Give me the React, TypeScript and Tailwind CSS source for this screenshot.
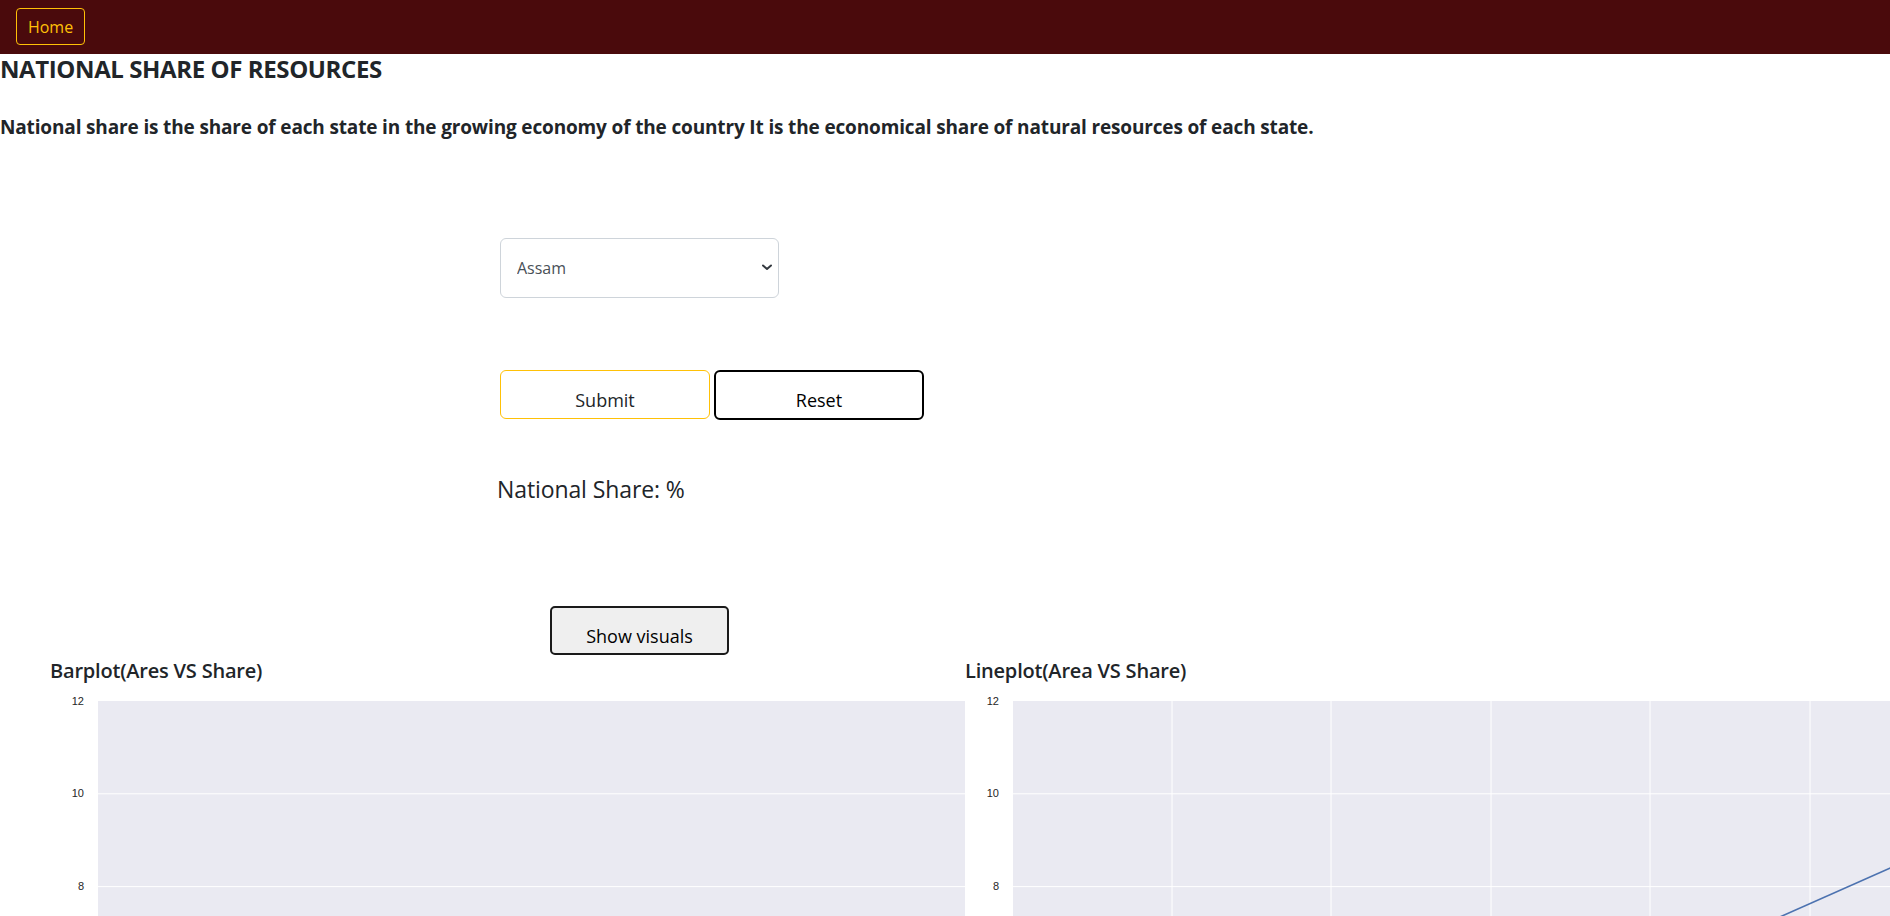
import React from "react";

const font = { fontFamily: '"Open Sans", "Noto Sans", sans-serif' };

function Chart({ title, kind }: { title: string; kind: "bar" | "line" }) {
  const W = kind === "bar" ? 915 : 925;
  const H = 420;
  const plotLeft = 48;
  const plotTop = 40;
  const unit = 46.4; // px per y-unit
  const yFor = (v: number) => plotTop + (12 - v) * unit;
  const ticks = [12, 10, 8, 6, 4, 2, 0];
  const vlines = [207, 366, 526, 685, 845];
  return (
    <div className="flex flex-col shrink-0 w-[915px]">
      <div className="text-[20px] font-semibold text-[#212529] leading-[24px] pt-[2px] tracking-[-0.2px]">{title}</div>
      <svg width={W} height={H} className="block shrink-0" style={{ marginTop: -22 }}>
        <rect x={plotLeft} y={plotTop} width={W - plotLeft} height={H - plotTop} fill="#eaeaf2" />
        {ticks.map((t) => (
          <g key={t}>
            {t !== 12 && (
              <line x1={plotLeft} x2={W} y1={yFor(t)} y2={yFor(t)} stroke="#ffffff" strokeWidth={1} />
            )}
            <text
              x={plotLeft - 14}
              y={yFor(t) + 3.5}
              textAnchor="end"
              fontSize={11}
              fill="#262626"
              fontFamily='"Liberation Sans", Arial, sans-serif'
            >
              {t}
            </text>
          </g>
        ))}
        {kind === "line" &&
          vlines.map((x) => <line key={x} x1={x} x2={x} y1={plotTop} y2={H} stroke="#ffffff" strokeWidth={1} />)}
        {kind === "line" && (
          <line x1={700} y1={307} x2={1000} y2={173.7} stroke="#4c72b0" strokeWidth={1.6} />
        )}
      </svg>
    </div>
  );
}

export default function App() {
  return (
    <div className="w-[1890px] h-[916px] overflow-hidden bg-white text-[#212529]" style={font}>
      <nav className="h-[54px] bg-[#4a0a0c] flex items-start pl-[16px] pt-[8px]">
        <button className="h-[37px] w-[69px] border border-[#ffc107] rounded-[4px] text-[#ffc107] text-[16px] leading-none">
          Home
        </button>
      </nav>
      <h4 className="text-[24px] font-bold leading-[29px] m-0 tracking-[-0.4px]">NATIONAL SHARE OF RESOURCES</h4>
      <p className="text-[19px] font-bold leading-[24px] mt-[32px] tracking-[-0.15px]">
        National share is the share of each state in the growing economy of the country It is the economical share
        of natural resources of each state.
      </p>

      <div className="ml-[500px] mt-[99px] flex flex-col items-start">
        <div className="relative w-[279px] h-[60px]">
          <select
            className="appearance-none w-full h-full border border-[#ced4da] rounded-[6px] pl-[16px] text-[16px] text-[#495057] bg-white outline-none"
            defaultValue="Assam"
            style={font}
          >
            <option>Assam</option>
          </select>
          <svg
            className="absolute right-[7px] top-[26px] pointer-events-none"
            width="10"
            height="7"
            viewBox="0 0 10 7"
          >
            <path d="M1 1.5 L5 5 L9 1.5" fill="none" stroke="#343a40" strokeWidth="2" strokeLinecap="round" strokeLinejoin="round" />
          </svg>
        </div>

        <div className="flex gap-[4px] mt-[72px]">
          <button className="w-[210px] h-[49px] border border-[#ffc107] rounded-[6px] bg-white text-[18px] text-[#212529] pt-[10px] leading-none">
            Submit
          </button>
          <button className="w-[210px] h-[50px] border-2 border-black rounded-[6px] bg-white text-[18px] text-black pt-[10px] leading-none">
            Reset
          </button>
        </div>

        <div className="text-[23px] leading-[29px] mt-[55px] -ml-[3px] tracking-[-0.1px]">National Share: %</div>

        <button className="ml-[50px] mt-[102px] w-[179px] h-[49px] border-2 border-[#1a1a1a] rounded-[5px] bg-[#efefef] text-[18px] text-black pt-[11px] leading-none">
          Show visuals
        </button>
      </div>

      <div className="flex ml-[50px] mt-[2px]">
        <Chart title="Barplot(Ares VS Share)" kind="bar" />
        <Chart title="Lineplot(Area VS Share)" kind="line" />
      </div>
    </div>
  );
}
